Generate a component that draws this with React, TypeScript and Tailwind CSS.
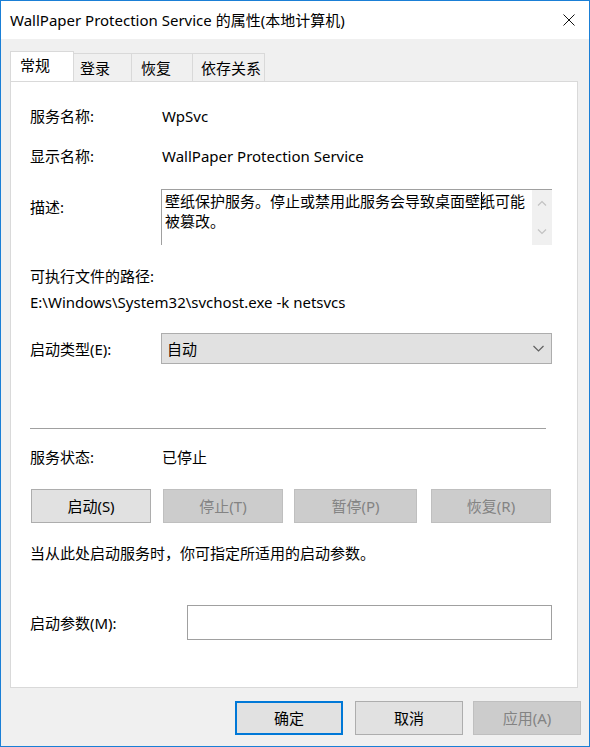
import React from "react";

const font = "font-['Noto_Sans','Noto_Sans_CJK_SC',sans-serif]";

function Tab({ label, active, className }: { label: string; active?: boolean; className: string }) {
  if (active) {
    return (
      <div className={`relative z-10 -mb-px h-[30px] border border-b-0 border-[#d9d9d9] bg-white pt-[3px] pl-[9px] ${className}`}>
        {label}
      </div>
    );
  }
  return (
    <div className={`mt-[2px] h-[28px] border border-b-0 border-l-0 border-[#d9d9d9] bg-[#f0f0f0] pt-[4px] ${className}`}>
      {label}
    </div>
  );
}

function ActionButton({ label, disabled, className }: { label: string; disabled?: boolean; className: string }) {
  return (
    <div
      className={`flex h-[34px] items-center justify-center border ${
        disabled ? "border-[#bfbfbf] bg-[#cccccc] text-[#838383]" : "border-[#adadad] bg-[#e1e1e1] text-black"
      } ${className}`}
    >
      {label}
    </div>
  );
}

export default function App() {
  return (
    <div className={`flex h-[747px] w-[590px] flex-col border border-[#1a7fd6] bg-[#f0f0f0] text-[15px] leading-[20px] text-black ${font}`}>
      {/* title bar */}
      <div className="flex h-[38px] shrink-0 items-center justify-between bg-white pl-[9px] pr-[13px]">
        <span>WallPaper Protection Service 的属性(本地计算机)</span>
        <svg width="12" height="12" viewBox="0 0 12 12" className="mr-[1px]">
          <path d="M0.5 0.5 L11.5 11.5 M11.5 0.5 L0.5 11.5" stroke="#111" strokeWidth="1" />
        </svg>
      </div>

      <div className="flex flex-1 flex-col pl-[9px] pr-[8px] pt-[12px]">
        {/* tabs */}
        <div className="flex items-start pr-[3px]">
          <Tab label="常规" active className="w-[64px]" />
          <Tab label="登录" className="w-[58px] pl-[6px]" />
          <Tab label="恢复" className="w-[61px] pl-[9px]" />
          <Tab label="依存关系" className="w-[72px] pl-[8px]" />
        </div>

        {/* panel */}
        <div className="mr-[3px] flex h-[607px] flex-col border border-[#d9d9d9] bg-white pl-[19px] pr-[25px]">
          <div className="mt-[24px] flex">
            <span className="w-[132px]">服务名称:</span>
            <span>WpSvc</span>
          </div>
          <div className="mt-[20px] flex">
            <span className="w-[132px]">显示名称:</span>
            <span>WallPaper Protection Service</span>
          </div>
          <div className="mt-[23px] flex">
            <span className="w-[131px] pt-[8px]">描述:</span>
            <div className="flex h-[56px] flex-1 border-l border-t border-[#a0a0a0]">
              <div className="relative flex-1 pl-[3px] pt-[1px]">
                壁纸保护服务。停止或禁用此服务会导致桌面壁纸可能被篡改。
                {/* text caret */}
                <div className="absolute left-[319px] top-[2px] h-[18px] w-px bg-black" />
              </div>
              <div className="flex w-[20px] flex-col items-center justify-between bg-[#f0f0f0] py-[10px]">
                <svg width="10" height="6" viewBox="0 0 10 6">
                  <path d="M1 5.5 L5 1.5 L9 5.5" fill="none" stroke="#c2c2c2" strokeWidth="1.2" />
                </svg>
                <svg width="10" height="6" viewBox="0 0 10 6">
                  <path d="M1 0.5 L5 4.5 L9 0.5" fill="none" stroke="#c2c2c2" strokeWidth="1.2" />
                </svg>
              </div>
            </div>
          </div>
          <div className="mt-[21px]">可执行文件的路径:</div>
          <div className="mt-[6px]">E:\Windows\System32\svchost.exe -k netsvcs</div>
          <div className="mt-[21px] flex items-center">
            <span className="w-[131px]">启动类型(E):</span>
            <div className="flex h-[31px] flex-1 items-center justify-between border border-[#adadad] bg-[#e1e1e1] pl-[5px] pr-[7px]">
              <span>自动</span>
              <svg width="11" height="7" viewBox="0 0 11 7">
                <path d="M0.5 1 L5.5 6 L10.5 1" fill="none" stroke="#606060" strokeWidth="1.2" />
              </svg>
            </div>
          </div>
          <div className="mr-[6px] mt-[64px] h-px bg-[#a0a0a0]" />
          <div className="mt-[18px] flex">
            <span className="w-[132px]">服务状态:</span>
            <span>已停止</span>
          </div>
          <div className="mt-[22px] flex">
            <ActionButton label="启动(S)" className="ml-px w-[120px]" />
            <ActionButton label="停止(T)" disabled className="ml-[12px] w-[120px]" />
            <ActionButton label="暂停(P)" disabled className="ml-[11px] w-[123px]" />
            <ActionButton label="恢复(R)" disabled className="ml-[14px] w-[120px]" />
          </div>
          <div className="mt-[20px]">当从此处启动服务时，你可指定所适用的启动参数。</div>
          <div className="mt-[42px] flex items-center">
            <span className="w-[157px]">启动参数(M):</span>
            <div className="h-[35px] flex-1 border border-[#a0a0a0] bg-white" />
          </div>
        </div>

        {/* dialog buttons */}
        <div className="mt-[13px] flex justify-end gap-[12px]">
          <div className="flex h-[34px] w-[108px] items-center justify-center border-2 border-[#0078d7] bg-[#e1e1e1]">确定</div>
          <ActionButton label="取消" className="w-[108px]" />
          <ActionButton label="应用(A)" disabled className="ml-[-2px] w-[108px]" />
        </div>
      </div>
    </div>
  );
}
